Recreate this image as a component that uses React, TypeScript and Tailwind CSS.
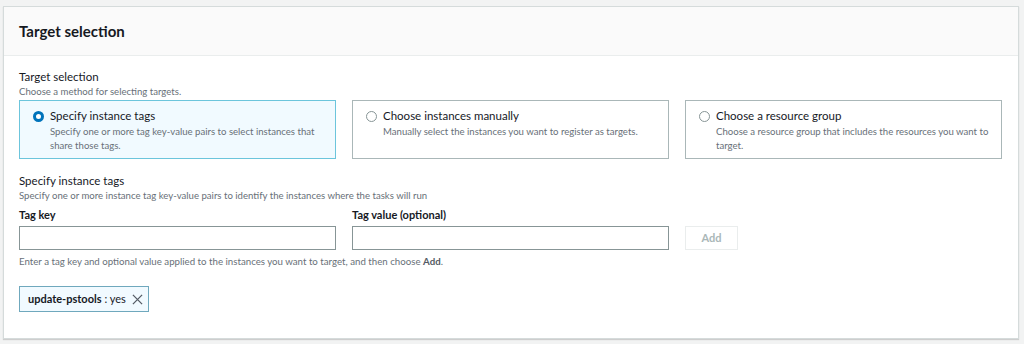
import React from "react";

function Radio({ checked }: { checked?: boolean }) {
  return checked ? (
    <span className="mt-[4px] box-border h-[11px] w-[11px] shrink-0 rounded-full border-[3.5px] border-[#0073bb] bg-white" />
  ) : (
    <span className="mt-[4px] box-border h-[11px] w-[11px] shrink-0 rounded-full border border-[#879596] bg-white" />
  );
}

function Card({
  title,
  desc,
  checked,
}: {
  title: string;
  desc: string;
  checked?: boolean;
}) {
  return (
    <div
      className={
        "flex h-[59px] gap-[6px] border pl-[13px] pr-[10px] pt-[6px] " +
        (checked ? "border-[#6cc5dc] bg-[#f1faff]" : "border-[#aab7b8] bg-white")
      }
    >
      <Radio checked={checked} />
      <div className="flex flex-col">
        <div className="text-[11.5px] leading-[18px] text-[#16191f]">{title}</div>
        <div className="text-[9.6px] leading-[14px] text-[#687078]">{desc}</div>
      </div>
    </div>
  );
}

export default function App() {
  return (
    <div
      className="h-[344px] w-[1024px] bg-[#f2f3f3] pl-[3px] pr-[5px] pt-[6px]"
      style={{ fontFamily: 'Lato, "Open Sans", sans-serif' }}
    >
      <div className="h-[333px] border border-[#d5dbdb] bg-white shadow-[0_1px_1px_rgba(0,0,0,0.15)]">
        <div className="flex h-[49px] items-center border-b border-[#eaeded] bg-[#fafafa] px-[15px]">
          <h2 className="text-[15px] font-bold text-[#16191f]">Target selection</h2>
        </div>
        <div className="px-[15px] pt-[13px]">
          <div className="text-[11.5px] leading-[16px] text-[#16191f]">Target selection</div>
          <div className="text-[9.6px] leading-[13px] text-[#687078]">Choose a method for selecting targets.</div>
          <div className="mt-[2px] grid grid-cols-[317px_317px_317px] gap-[16px]">
            <Card
              checked
              title="Specify instance tags"
              desc="Specify one or more tag key-value pairs to select instances that share those tags."
            />
            <Card
              title="Choose instances manually"
              desc="Manually select the instances you want to register as targets."
            />
            <Card
              title="Choose a resource group"
              desc="Choose a resource group that includes the resources you want to target."
            />
          </div>
          <div className="mt-[14px] text-[11.5px] leading-[16px] text-[#16191f]">Specify instance tags</div>
          <div className="text-[9.6px] leading-[13px] text-[#687078]">
            Specify one or more instance tag key-value pairs to identify the instances where the tasks will run
          </div>
          <div className="mt-[5px] flex items-end gap-[16px]">
            <div className="flex w-[317px] flex-col">
              <label className="text-[11px] font-bold leading-[16px] text-[#16191f]">Tag key</label>
              <input className="mt-[3px] h-[24px] border border-[#879596] bg-white" />
            </div>
            <div className="flex w-[317px] flex-col">
              <label className="text-[11px] font-bold leading-[16px] text-[#16191f]">Tag value (optional)</label>
              <input className="mt-[3px] h-[24px] border border-[#879596] bg-white" />
            </div>
            <button className="h-[24px] w-[53px] border border-[#eaeded] bg-white text-[11px] font-bold text-[#aab7b8]">
              Add
            </button>
          </div>
          <div className="mt-[4px] text-[9.7px] leading-[14px] text-[#687078]">
            Enter a tag key and optional value applied to the instances you want to target, and then choose{" "}
            <span className="font-bold text-[#545b64]">Add</span>.
          </div>
          <div className="mt-[18px] inline-flex h-[26px] items-center gap-[6px] border border-[#6fa8bd] bg-[#f1faff] pl-[8px] pr-[5px] text-[11px] text-[#16191f]">
            <span>
              <span className="font-bold">update-pstools</span> : yes
            </span>
            <svg width="11" height="11" viewBox="0 0 12 12" fill="none" stroke="#545b64" strokeWidth="1.4">
              <path d="M1 1 L11 11 M11 1 L1 11" />
            </svg>
          </div>
        </div>
      </div>
    </div>
  );
}
